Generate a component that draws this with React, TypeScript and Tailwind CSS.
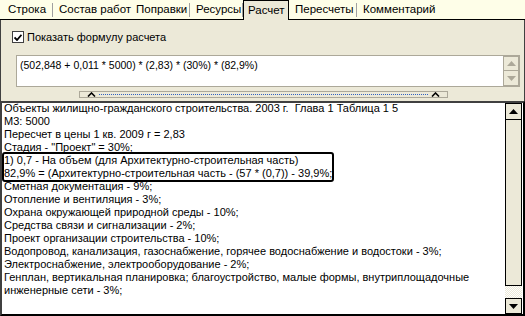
import React from 'react';

const tabs = [
  { label: 'Строка', w: 'w-[51px]' },
  { label: 'Состав работ', w: 'w-[77px]' },
  { label: 'Поправки', w: 'w-[60px]' },
  { label: 'Ресурсы', w: 'w-[53px]' },
  { label: 'Расчет', w: 'w-[46px]', active: true },
  { label: 'Пересчеты', w: 'w-[68px]' },
  { label: 'Комментарий', w: 'w-[74px]' },
];

const lines = [
  'Объекты жилищно-гражданского строительства. 2003 г.  Глава 1 Таблица 1 5',
  'М3: 5000',
  'Пересчет в цены 1 кв. 2009 г = 2,83',
  'Стадия - "Проект" = 30%;',
];

const linesAfter = [
  'Сметная документация - 9%;',
  'Отопление и вентиляция - 3%;',
  'Охрана окружающей природной среды - 10%;',
  'Средства связи и сигнализации - 2%;',
  'Проект организации строительства - 10%;',
  'Водопровод, канализация, газоснабжение, горячее водоснабжение и водостоки - 3%;',
  'Электроснабжение, электрооборудование - 2%;',
  'Генплан, вертикальная планировка; благоустройство, малые формы, внутриплощадочные',
  'инженерные сети - 3%;',
];

const Arrow = ({ up, color }: { up?: boolean; color: string }) => (
  <svg width="9" height="5" viewBox="0 0 9 5">
    {up ? <path d="M0 5 L4.5 0 L9 5 Z" fill={color} /> : <path d="M0 0 L4.5 5 L9 0 Z" fill={color} />}
  </svg>
);

const Caret = () => (
  <svg width="9" height="5" viewBox="0 0 9 5">
    <path d="M1 4.5 L4.5 1 L8 4.5" stroke="#000" strokeWidth="1.6" fill="none" />
  </svg>
);

const App: React.FC = () => {
  return (
    <div
      className="w-[525px] h-[316px] bg-[#ece9d8] flex flex-col overflow-hidden text-black"
      style={{ fontFamily: '"Liberation Sans", Arial, sans-serif' }}
    >
      {/* tab strip */}
      <div className="h-[20px] shrink-0 bg-[#fefee8] flex items-end pl-[2px] border-b border-black">
        {tabs.map((t) =>
          t.active ? (
            <div
              key={t.label}
              className={`${t.w} shrink-0 h-[20px] -mb-px bg-[#ece9d8] border border-b-0 border-black flex items-center pl-[4px] text-[11.5px] whitespace-nowrap z-10`}
            >
              {t.label}
            </div>
          ) : (
            <div key={t.label} className={`${t.w} shrink-0 h-[18px] flex items-center text-[11.5px] whitespace-nowrap`}>
              <span className="pl-[6px] flex-1">{t.label}</span>
              <span className="w-px h-[14px] bg-[#a0a0a0]" />
            </div>
          )
        )}
      </div>

      <div className="flex-1 flex flex-col border-l border-r border-[#404040] min-h-0">
        {/* checkbox row */}
        <div className="flex items-center h-[22px] mt-[6px] pl-[11px] shrink-0">
          <div className="w-[12px] h-[12px] bg-white border border-[#404040] flex items-center justify-center">
            <svg width="8" height="7" viewBox="0 0 8 7">
              <path d="M0.5 3.5 L3 6 L7.5 0.8" stroke="#000" strokeWidth="1.8" fill="none" />
            </svg>
          </div>
          <span className="ml-[3px] text-[11px]">Показать формулу расчета</span>
        </div>

        {/* formula box */}
        <div className="ml-[15px] mr-[4px] mt-[7px] h-[32px] shrink-0 flex border border-[#aca899] bg-white">
          <div className="flex-1 text-[10.5px] pl-[3px] pt-[2px]">
            (502,848 + 0,011 * 5000) * (2,83) * (30%) * (82,9%)
          </div>
          <div className="w-[16px] flex flex-col bg-[#ece9d8]">
            <div className="h-[15px] border border-[#aca899] flex items-center justify-center">
              <Arrow up color="#aca899" />
            </div>
            <div className="h-[15px] border border-[#aca899] border-t-0 flex items-center justify-center">
              <Arrow color="#aca899" />
            </div>
          </div>
        </div>

        {/* splitter */}
        <div className="ml-[78px] w-[369px] h-[7px] mt-[4px] shrink-0 border border-[#aca899] flex items-center px-[7px] gap-[3px]">
          <Caret />
          <div className="flex-1 border-t border-dotted border-[#3060c0]" />
          <Caret />
        </div>

        {/* memo */}
        <div className="flex-1 mt-[3px] -mx-px border-2 border-black border-t-[#404040] border-l-[#404040] bg-white flex min-h-0">
          <div className="flex-1 pl-[2px] -mt-px text-[11px] leading-[13px]">
            {lines.map((l) => (
              <div key={l} className="whitespace-pre">{l}</div>
            ))}
            <div className="relative w-fit pr-[1px]">
              <div className="absolute -left-[2px] -right-[1px] -top-[2px] -bottom-[2px] border-2 border-black rounded-[3px]" />
              <div className="whitespace-pre">1) 0,7 - На объем (для Архитектурно-строительная часть)</div>
              <div className="whitespace-pre">82,9% = (Архитектурно-строительная часть - (57 * (0,7)) - 39,9%;</div>
            </div>
            {linesAfter.map((l) => (
              <div key={l} className="whitespace-pre">{l}</div>
            ))}
          </div>
          <div className="w-[17px] flex flex-col bg-[#ece9d8] mr-[1px]">
            <div className="h-[17px] border border-black flex items-center justify-center">
              <Arrow up color="#000" />
            </div>
            <div className="flex-1 border border-t-0 border-black" />
            <div className="h-[12px] bg-[repeating-conic-gradient(#ffffff_0_25%,#ece9d8_0_50%)] bg-[length:2px_2px]" />
            <div className="h-[16px] border border-black flex items-center justify-center">
              <Arrow color="#000" />
            </div>
          </div>
        </div>
      </div>
    </div>
  );
};

export default App;
